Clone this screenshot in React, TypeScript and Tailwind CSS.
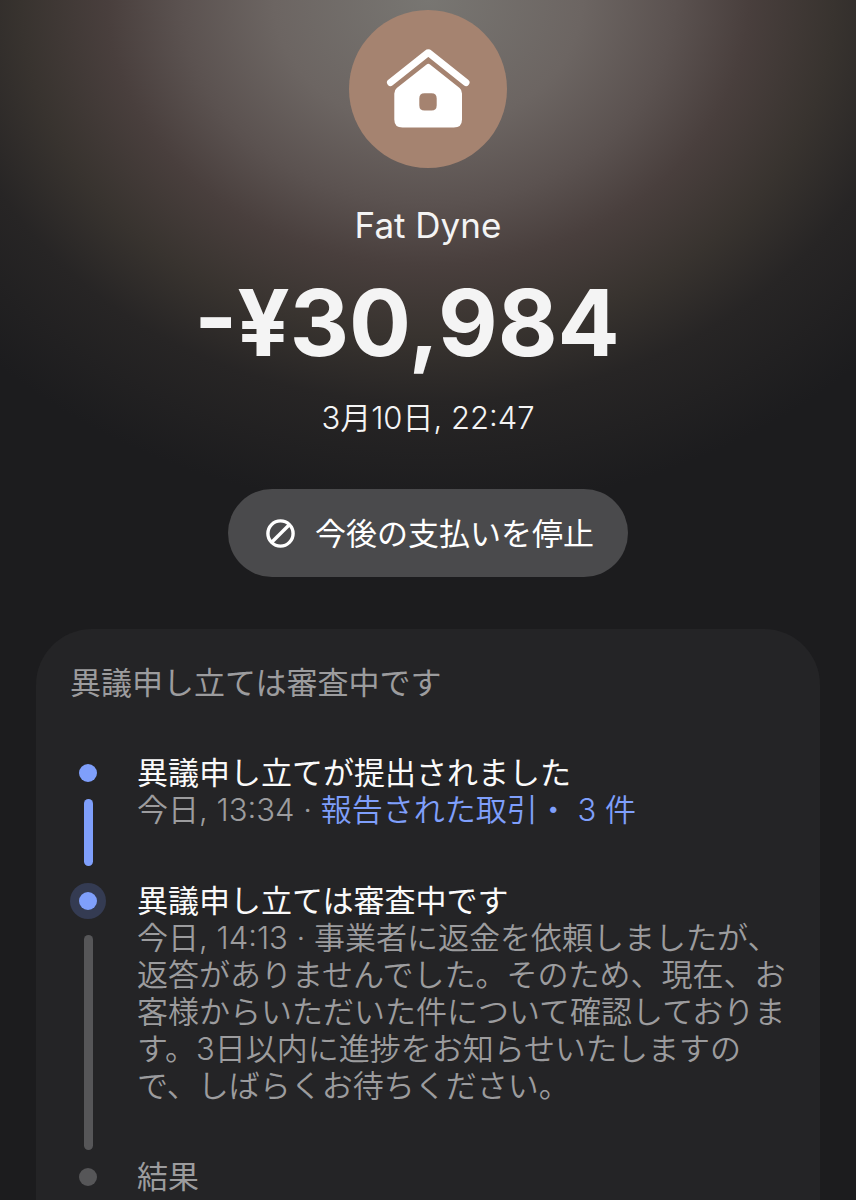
import type { ReactNode } from "react"
import clsx from "clsx"

interface TimelineStepProps {
  title: string
  status: "done" | "active" | "pending"
  children?: ReactNode
}

function HouseIcon() {
  return (
    <svg viewBox="0 0 158 158" className="w-full h-full" fill="none" aria-hidden="true">
      <path
        d="M41.5 72.5 78 43.4Q79.3 42.4 80.6 43.4L117 72.5"
        stroke="#fff"
        strokeWidth="7"
        strokeLinecap="round"
        strokeLinejoin="round"
      />
      <path
        fill="#fff"
        fillRule="evenodd"
        d="M77.6 54.4Q79.3 53 81 54.4L110.6 78Q113 80 113 83.5V109.5Q113 117.6 104.8 117.6H53.5Q45.3 117.6 45.3 109.5V83.5Q45.3 80 47.8 78ZM75.5 83.3Q70.3 83.3 70.3 88.5V95.3Q70.3 100.5 75.5 100.5H82.5Q87.7 100.5 87.7 95.3V88.5Q87.7 83.3 82.5 83.3Z"
      />
    </svg>
  )
}

function BlockIcon() {
  return (
    <svg viewBox="0 0 29 29" className="w-[29px] h-[29px]" fill="none" stroke="#fff" strokeWidth="3.4" aria-hidden="true">
      <circle cx="14.5" cy="14.5" r="12.6" />
      <path d="M5.7 23.3 23.3 5.7" />
    </svg>
  )
}

function TimelineStep({ title, status, children }: TimelineStepProps) {
  return (
    <li className="flex gap-[31px]">
      <div className="w-9 shrink-0 flex flex-col items-center">
        <div className="h-[37px] flex items-center">
          <span
            className={clsx(
              "rounded-full flex items-center justify-center",
              status === "active" && "w-9 h-9 bg-[#343b52]"
            )}
          >
            <span
              className={clsx(
                "w-[18px] h-[18px] rounded-full",
                status === "pending" ? "bg-[#565658]" : "bg-[#7f9ffb]"
              )}
            />
          </span>
        </div>
        {status === "done" && <span className="w-[9px] grow mt-2 mb-4 rounded-full bg-[#7f9ffb]" />}
        {status === "active" && <span className="w-[9px] grow mt-4 mb-2 rounded-full bg-[#565658]" />}
      </div>
      <div className={clsx("min-w-0 text-[#9c9c9e]", status !== "pending" && "pb-[54px]")}>
        <h3 className={clsx(status !== "pending" && "text-[#fafafa]")}>{title}</h3>
        {children && <p className="font-[350]">{children}</p>}
      </div>
    </li>
  )
}

export default function App() {
  return (
    <main
      lang="ja"
      className="min-h-screen flex flex-col bg-[#1c1c1e] bg-[radial-gradient(72%_510px_at_50%_0,#787672_0%,#6c6562_25%,#5b5250_40%,#493f3d_52%,#38332f_66%,#272525_79%,#1c1c1e_100%)] px-9 pt-[10px] text-[31px] leading-[37px] text-[#f4f4f4] font-['Inter','Noto_Sans_CJK_JP',sans-serif]"
    >
      <header className="flex flex-col items-center">
        <div className="w-[158px] h-[158px] rounded-full bg-[#a58370]">
          <HouseIcon />
        </div>
        <h1 className="mt-[35px] text-[35px] leading-[44px]">Fat Dyne</h1>
        <p className="mt-[18px] pr-[42px] text-[92px] leading-[116px] font-bold">-¥30,984</p>
        <p className="mt-[18px] font-[350]">3月10日, 22:47</p>
        <button
          type="button"
          className="mt-[53px] h-[88px] pl-[38px] pr-[34px] flex items-center gap-5 rounded-full bg-[#4a4a4c] text-white cursor-pointer"
        >
          <BlockIcon />
          <span>今後の支払いを停止</span>
        </button>
      </header>

      <section className="mt-[52px] grow rounded-t-[56px] bg-[#242426] pl-[34px] pr-8 pt-[35px]">
        <h2 className="text-[#9c9c9e]">異議申し立ては審査中です</h2>
        <ol className="mt-[53px]">
          <TimelineStep title="異議申し立てが提出されました" status="done">
            今日, 13:34 ·{" "}
            <a href="#transactions" className="text-[#7f9ffb]">
              報告された取引・ 3 件
            </a>
          </TimelineStep>
          <TimelineStep title="異議申し立ては審査中です" status="active">
            今日, 14:13 · 事業者に返金を依頼しましたが、返答がありませんでした。そのため、現在、お客様からいただいた件について確認しております。3日以内に進捗をお知らせいたしますので、しばらくお待ちください。
          </TimelineStep>
          <TimelineStep title="結果" status="pending" />
        </ol>
      </section>
    </main>
  )
}
